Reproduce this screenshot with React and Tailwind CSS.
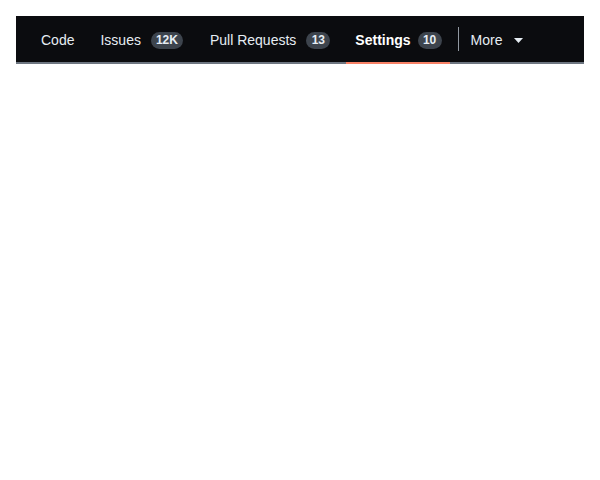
const TABS = [
  { label: 'Code', gap: 'ml-0 px-2' },
  { label: 'Issues', count: '12K', gap: 'ml-[10px] px-2' },
  { label: 'Pull Requests', count: '13', gap: 'ml-[11px] px-2' },
  { label: 'Settings', count: '10', active: true, gap: 'ml-[8px] pl-[9px] pr-2' },
]

function Badge({ active, children }) {
  return (
    <span className={`${active ? 'ml-[7px]' : 'ml-[10px]'} inline-flex items-center justify-center h-[17px] min-w-[24px] px-[5px] rounded-full bg-[#3d444d] text-[12px] font-bold leading-none text-[#e6edf3]`}>
      {children}
    </span>
  )
}

export default function App() {
  return (
    <div className="min-h-screen bg-white p-4" style={{ fontFamily: '"Liberation Sans", Arial, sans-serif' }}>
      <nav className="flex items-stretch h-[48px] pl-[17px] pt-[2px] bg-[#0b0c0f] border-b-2 border-[#6e7681]">
        {TABS.map(t => (
          <a key={t.label}
            className={`${t.gap} relative flex items-center text-[14px] ${t.active ? 'font-bold text-white' : 'text-[#e6edf3]'}`}>
            {t.label}
            {t.count && <Badge active={t.active}>{t.count}</Badge>}
            {t.active && <span className="absolute left-0 right-0 -bottom-[2px] h-[2px] bg-[#f78166]" />}
          </a>
        ))}
        <div className="self-center w-px h-6 bg-[#9198a1] ml-2 -mt-[2px]" />
        <button className="flex items-center px-3 text-[14px] text-[#e6edf3]">
          More
          <svg className="ml-3" width="9" height="5" viewBox="0 0 9 5">
            <path d="M0 0h9L4.5 5z" fill="#e6edf3" />
          </svg>
        </button>
      </nav>
    </div>
  )
}
